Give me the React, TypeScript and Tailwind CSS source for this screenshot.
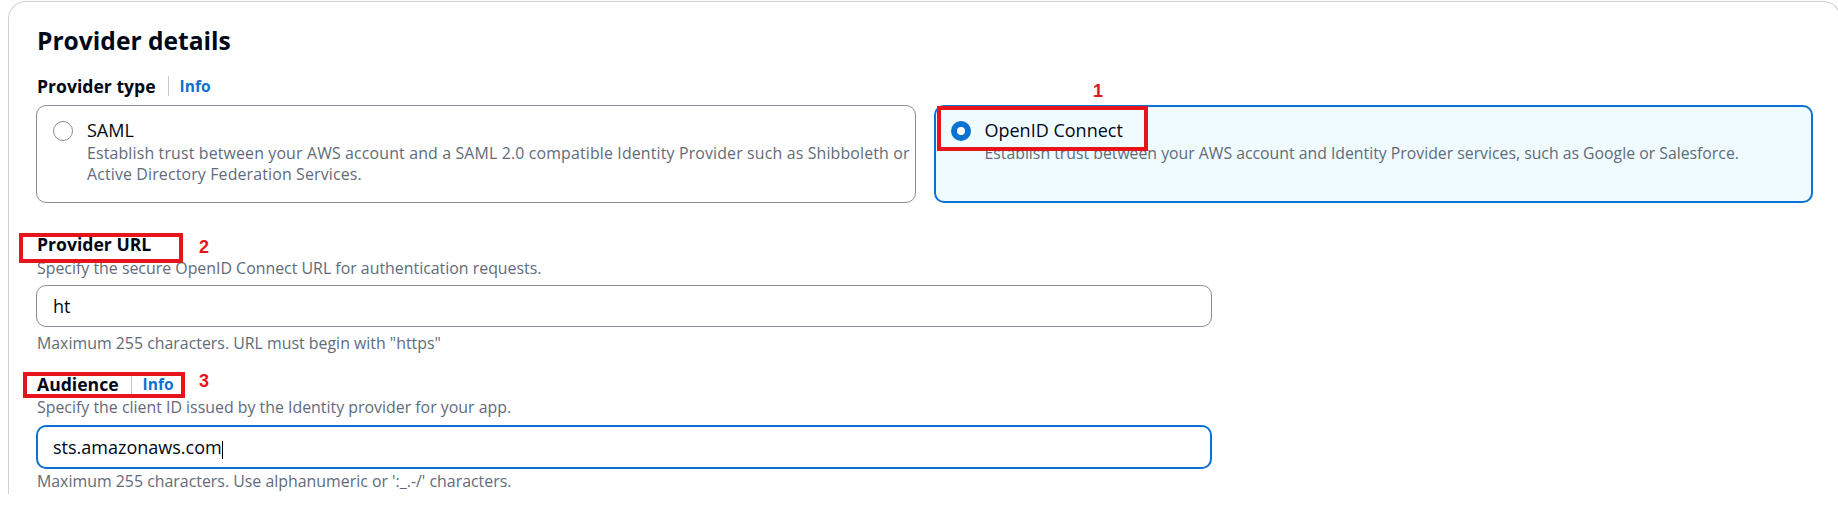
import React from "react";

function Radio({ checked }: { checked: boolean }) {
  return checked ? (
    <span className="block h-5 w-5 shrink-0 rounded-full border-[6px] border-[#0972d3] bg-white" />
  ) : (
    <span className="block h-5 w-5 shrink-0 rounded-full border-[1.5px] border-[#8c8c94] bg-white" />
  );
}

function FieldLabel({ text, info }: { text: string; info?: boolean }) {
  return (
    <div className="flex h-[22px] items-center">
      <span className="ml-px text-[17.6px] font-bold leading-[22px] text-[#000716]">{text}</span>
      {info && (
        <>
          <span className="ml-3 h-5 w-px bg-[#c6c6cd]" />
          <span className="ml-[11px] text-[15.5px] font-bold leading-[22px] text-[#0972d3]">Info</span>
        </>
      )}
    </div>
  );
}

function Hint({ children, className = "" }: { children: React.ReactNode; className?: string }) {
  return (
    <p className={`ml-px text-[15.9px] leading-[21px] text-[#5f6b7a] ${className}`}>{children}</p>
  );
}

export default function App() {
  return (
    <div className="relative h-[514px] w-[1838px] overflow-hidden bg-white pl-[8px] pt-px font-['Open_Sans',sans-serif]">
      <div className="h-[493px] w-[1833px] rounded-t-[18px] border border-b-0 border-[#d0d0d4] px-[27px] pt-6">
        <h2 className="ml-px text-[24.6px] font-bold leading-[30px] text-[#000716]">Provider details</h2>

        <div className="mt-[19px]">
          <FieldLabel text="Provider type" info />
        </div>

        <div className="mt-2 grid grid-cols-2 gap-[18px]">
          <div className="h-[98px] rounded-[10px] border border-[#8c8c94] bg-white pl-4 pr-4 pt-[12px]">
            <div className="flex h-[25px] items-center gap-[14px]">
              <Radio checked={false} />
              <span className="text-[18px] leading-[25px] text-[#000716]">SAML</span>
            </div>
            <p className="pl-[34px] text-[15.9px] leading-[21px] tracking-[0.15px] text-[#5f6b7a]">
              <span className="whitespace-nowrap">
                Establish trust between your AWS account and a SAML 2.0 compatible Identity Provider such as Shibboleth or
              </span>
              <br />
              Active Directory Federation Services.
            </p>
          </div>
          <div className="h-[98px] rounded-[10px] border-2 border-[#0972d3] bg-[#f0fbff] pl-[15px] pr-4 pt-[11px]">
            <div className="flex h-[25px] items-center gap-[14px]">
              <Radio checked />
              <span className="text-[18px] leading-[25px] text-[#000716]">OpenID Connect</span>
            </div>
            <p className="pl-[34px] text-[15.8px] leading-[21px] text-[#5f6b7a]">
              Establish trust between your AWS account and Identity Provider services, such as Google or Salesforce.
            </p>
          </div>
        </div>

        <div className="mt-[30px]">
          <FieldLabel text="Provider URL" />
        </div>
        <Hint className="mt-[3px]">Specify the secure OpenID Connect URL for authentication requests.</Hint>
        <div className="mt-[6px] flex h-[42px] w-[1176px] items-center rounded-[10px] border border-[#8c8c94] bg-white pl-4 text-[18px] text-[#000716]">
          ht
        </div>
        <Hint className="mt-[6px]">Maximum 255 characters. URL must begin with "https"</Hint>

        <div className="mt-[19px]">
          <FieldLabel text="Audience" info />
        </div>
        <Hint className="mt-[2px]">Specify the client ID issued by the Identity provider for your app.</Hint>
        <div className="mt-[7px] flex h-[44px] w-[1176px] items-center rounded-[10px] border-2 border-[#0972d3] bg-white pl-[15px] text-[18px] text-[#000716]">
          <span>sts.amazonaws.com</span>
          <span className="mt-[6px] h-[18px] w-px bg-black" />
        </div>
        <Hint className="mt-[2px]">Maximum 255 characters. Use alphanumeric or ':_.-/' characters.</Hint>
      </div>

      {/* annotation overlays */}
      <div className="absolute left-[937px] top-[106px] h-[45px] w-[211px] border-4 border-[#e8141c]" />
      <div className="absolute left-[19px] top-[233px] h-[30px] w-[164px] border-4 border-[#e8141c]" />
      <div className="absolute left-[23px] top-[372px] h-[26px] w-[162px] border-4 border-[#e8141c]" />
      <span className="absolute left-[1093px] top-[82px] font-['Liberation_Sans',sans-serif] text-[18px] font-bold leading-[18px] text-[#e8141c]">1</span>
      <span className="absolute left-[199px] top-[238px] font-['Liberation_Sans',sans-serif] text-[18px] font-bold leading-[18px] text-[#e8141c]">2</span>
      <span className="absolute left-[199px] top-[372px] font-['Liberation_Sans',sans-serif] text-[18px] font-bold leading-[18px] text-[#e8141c]">3</span>
    </div>
  );
}
